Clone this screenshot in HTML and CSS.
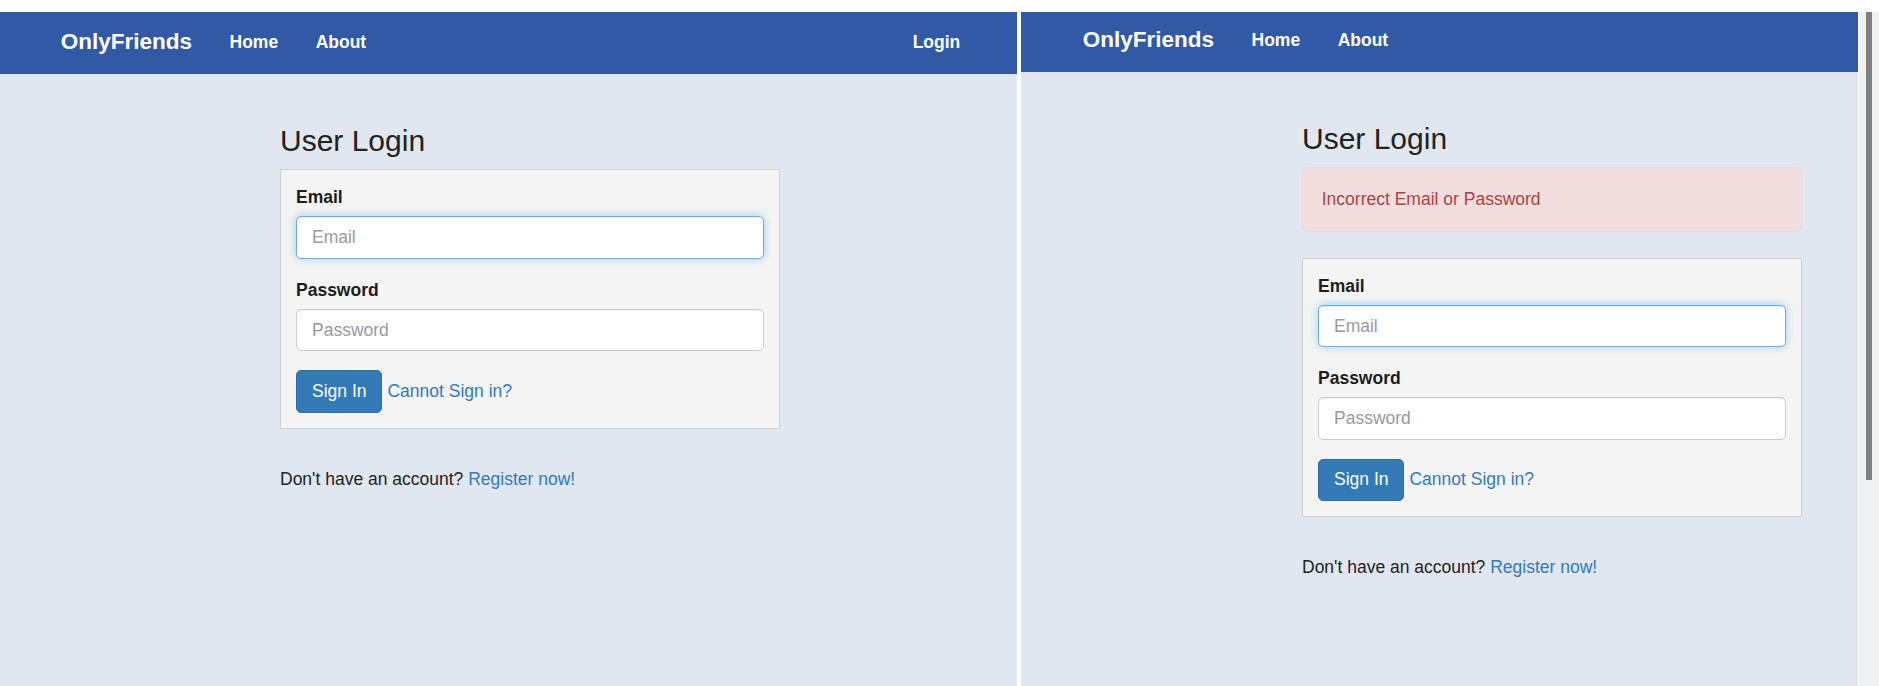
FILE: index.html
```html
<!DOCTYPE html>
<html lang="en">
<head>
<meta charset="utf-8">
<title>OnlyFriends – User Login</title>
<link rel="stylesheet" href="styles.css">
</head>
<body>
<div class="screen">
  <section class="window window--wide">
    <nav class="navbar">
      <a class="brand" href="#">OnlyFriends</a>
      <a class="nav-link" href="#">Home</a>
      <a class="nav-link" href="#">About</a>
      <a class="nav-link nav-link--end" href="#">Login</a>
    </nav>
    <main class="content">
      <h3 class="title">User Login</h3>
      <form class="well">
        <div class="form-group">
          <label class="field-label">Email</label>
          <input class="field field--focus" type="email" placeholder="Email">
        </div>
        <div class="form-group">
          <label class="field-label">Password</label>
          <input class="field" type="password" placeholder="Password">
        </div>
        <div class="actions">
          <button class="btn" type="button">Sign In</button>
          <a class="link" href="#">Cannot Sign in?</a>
        </div>
      </form>
      <p class="register">Don't have an account? <a class="link" href="#">Register now!</a></p>
    </main>
  </section>

  <section class="window window--narrow">
    <nav class="navbar">
      <a class="brand" href="#">OnlyFriends</a>
      <a class="nav-link" href="#">Home</a>
      <a class="nav-link" href="#">About</a>
    </nav>
    <main class="content">
      <h3 class="title">User Login</h3>
      <div class="alert">Incorrect Email or Password</div>
      <form class="well">
        <div class="form-group">
          <label class="field-label">Email</label>
          <input class="field field--focus" type="email" placeholder="Email">
        </div>
        <div class="form-group">
          <label class="field-label">Password</label>
          <input class="field" type="password" placeholder="Password">
        </div>
        <div class="actions">
          <button class="btn" type="button">Sign In</button>
          <a class="link" href="#">Cannot Sign in?</a>
        </div>
      </form>
      <p class="register">Don't have an account? <a class="link" href="#">Register now!</a></p>
    </main>
  </section>

  <div class="scrollbar"><div class="scrollbar-thumb"></div></div>
</div>
</body>
</html>
```

FILE: styles.css
```css
* {
  box-sizing: border-box;
}

html, body {
  margin: 0;
  padding: 0;
  background: #ffffff;
}

body {
  font-family: "Liberation Sans", Arial, Helvetica, sans-serif;
  font-size: 17.5px;
  line-height: 25px;
  color: #2b2b2b;
}

.screen {
  display: flex;
  height: 686px;
  padding-top: 12px;
  overflow: hidden;
}

.window {
  background: #e0e7f0;
  display: flex;
  flex-direction: column;
  overflow: hidden;
  flex: none;
}

.window--wide {
  width: 1017px;
}

.window--narrow {
  width: 837px;
  margin-left: 4px;
}

/* Navbar */
.navbar {
  display: flex;
  align-items: flex-start;
  height: 62px;
  background: #3259a5;
  padding: 0 38px 0 42px;
  flex: none;
}

.window--narrow .navbar {
  height: 60px;
  padding-left: 43px;
}

.brand {
  color: #ffffff;
  text-decoration: none;
  font-weight: bold;
  font-size: 22.5px;
  line-height: 25px;
  padding: 17px 18.75px 0;
}

.nav-link {
  color: #ffffff;
  text-decoration: none;
  font-weight: bold;
  font-size: 17.5px;
  line-height: 25px;
  padding: 17.7px 18.75px 0;
}

.window--narrow .brand {
  padding-top: 15.4px;
}

.window--narrow .nav-link {
  padding-top: 16px;
}

.nav-link--end {
  margin-left: auto;
}

/* Content */
.content {
  padding-left: 280px;
}

.window--narrow .content {
  padding-left: 281px;
}

.title {
  margin: 50px 0 12px;
  font-size: 30px;
  line-height: 33px;
  font-weight: normal;
  color: #222222;
}

.alert {
  width: 500px;
  padding: 18.75px;
  margin-bottom: 26px;
  border: 1px solid #efd6d9;
  border-radius: 5px;
  background: #f2dede;
  color: #a94442;
}

.well {
  width: 500px;
  margin: 0;
  padding: 15px;
  background: #f4f4f4;
  border: 1px solid #cfcfcf;
}

.form-group {
  margin-bottom: 18.75px;
}

.field-label {
  display: block;
  font-weight: bold;
  color: #1c1c1c;
  margin-bottom: 6.25px;
}

.field {
  display: block;
  width: 100%;
  height: 42.5px;
  padding: 7.5px 15px;
  font-family: inherit;
  font-size: 17.5px;
  line-height: 25px;
  color: #555555;
  background: #ffffff;
  border: 1px solid #cccccc;
  border-radius: 5px;
  box-shadow: inset 0 1px 1px rgba(0, 0, 0, 0.075);
  outline: none;
}

.field::placeholder {
  color: #999999;
}

.field--focus {
  border-color: #66afe9;
  box-shadow: inset 0 1px 1px rgba(0, 0, 0, 0.075), 0 0 8px rgba(102, 175, 233, 0.6);
}

.actions {
  display: flex;
  align-items: baseline;
  gap: 5px;
}

.btn {
  height: 42.5px;
  padding: 0 15px;
  font-family: inherit;
  font-size: 17.5px;
  line-height: 25px;
  color: #ffffff;
  background: #337ab7;
  border: 1px solid #2e6da4;
  border-radius: 5px;
  cursor: pointer;
}

.link {
  color: #337ab7;
  text-decoration: none;
}

.register {
  margin: 38px 0 0;
  color: #222222;
}

/* Scrollbar */
.scrollbar {
  flex: none;
  width: 20px;
  margin-left: 1px;
  background: #f0f0f0;
  display: flex;
  justify-content: center;
}

.scrollbar-thumb {
  width: 6px;
  height: 468px;
  background: #808080;
}
```
